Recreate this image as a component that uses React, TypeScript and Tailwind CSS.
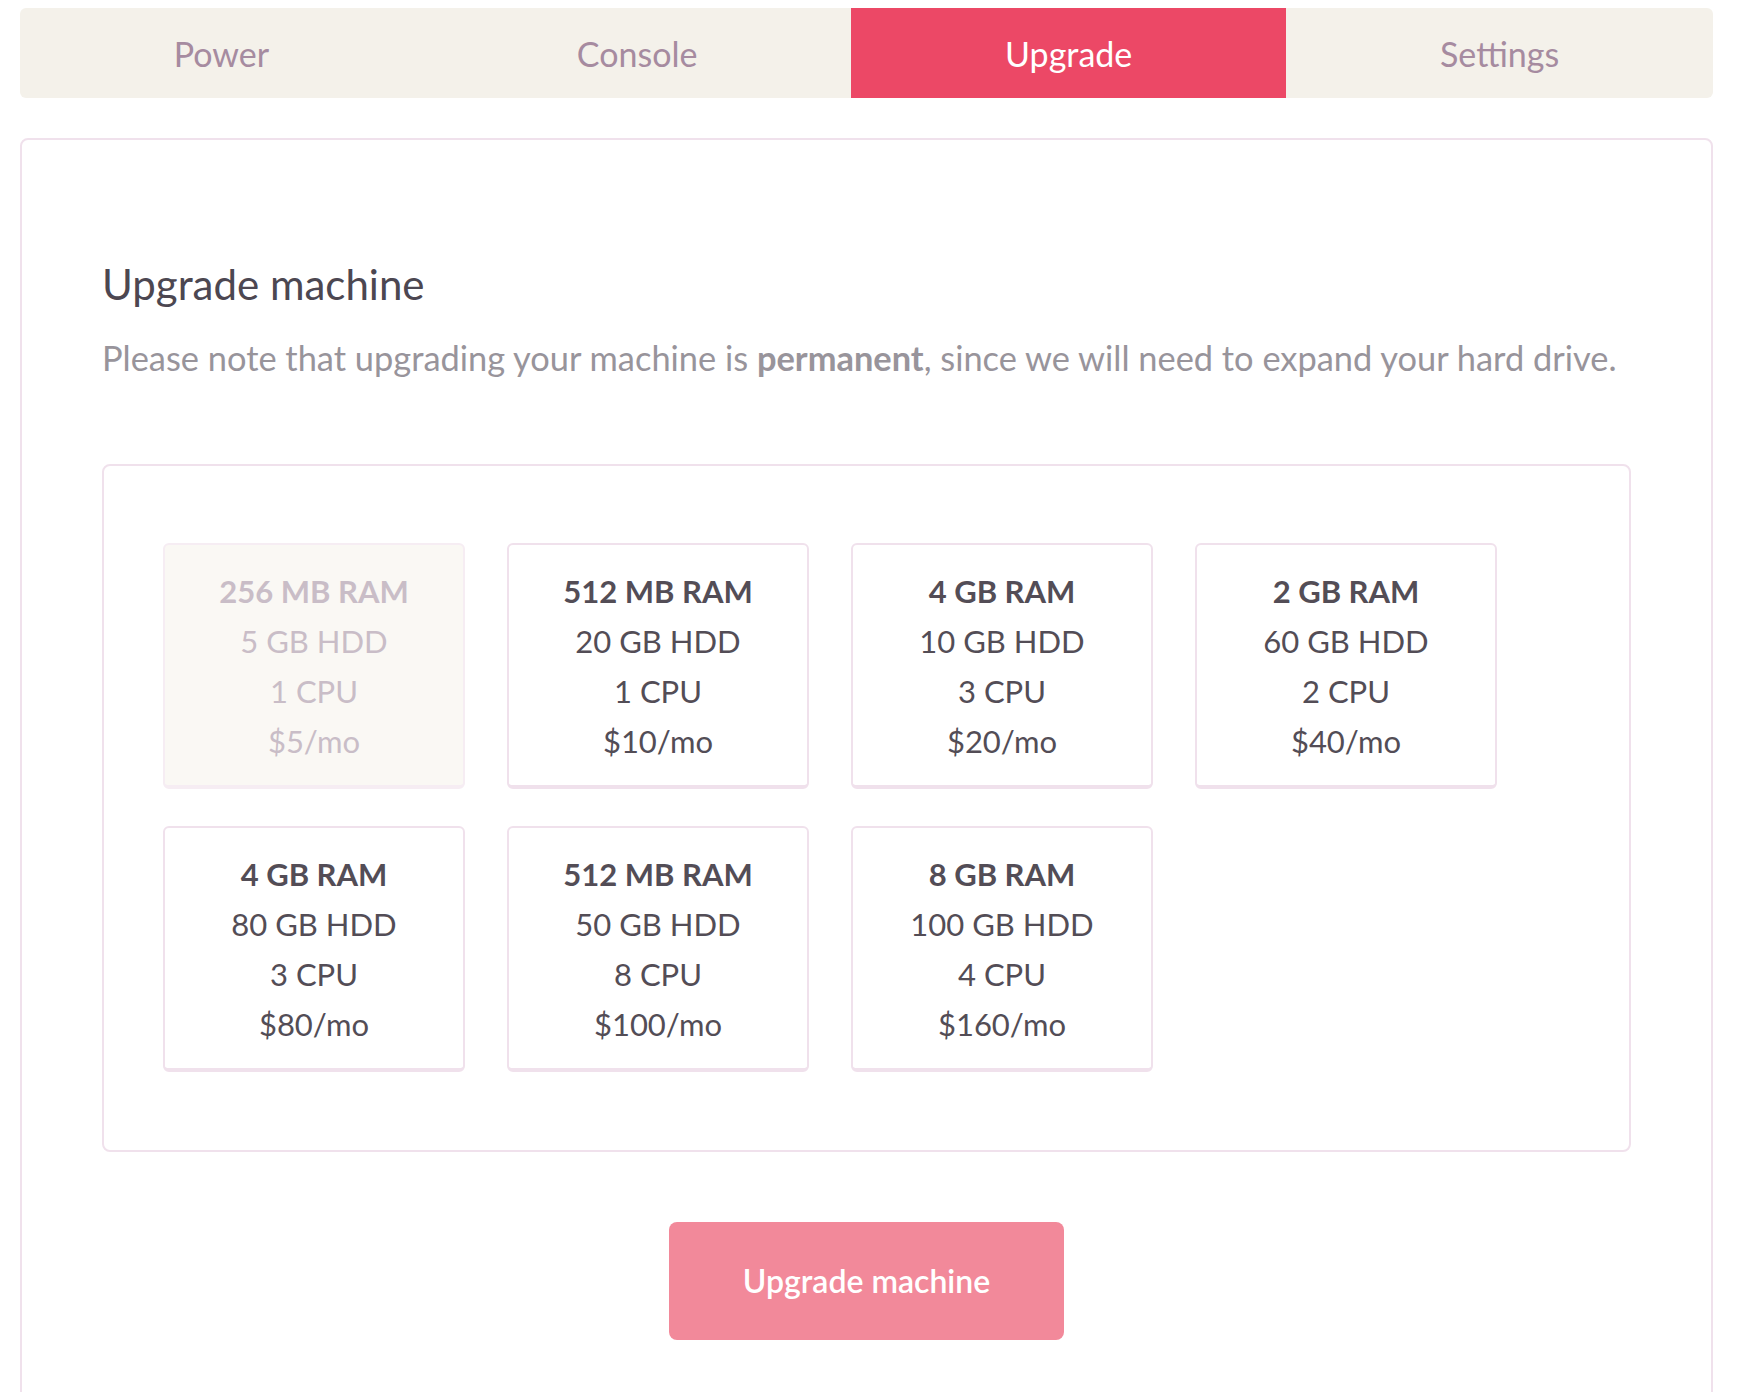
import React from "react";

type Plan = { ram: string; hdd: string; cpu: string; price: string; disabled?: boolean };

const plans: Plan[] = [
  { ram: "256 MB RAM", hdd: "5 GB HDD", cpu: "1 CPU", price: "$5/mo", disabled: true },
  { ram: "512 MB RAM", hdd: "20 GB HDD", cpu: "1 CPU", price: "$10/mo" },
  { ram: "4 GB RAM", hdd: "10 GB HDD", cpu: "3 CPU", price: "$20/mo" },
  { ram: "2 GB RAM", hdd: "60 GB HDD", cpu: "2 CPU", price: "$40/mo" },
  { ram: "4 GB RAM", hdd: "80 GB HDD", cpu: "3 CPU", price: "$80/mo" },
  { ram: "512 MB RAM", hdd: "50 GB HDD", cpu: "8 CPU", price: "$100/mo" },
  { ram: "8 GB RAM", hdd: "100 GB HDD", cpu: "4 CPU", price: "$160/mo" },
];

const tabs = ["Power", "Console", "Upgrade", "Settings"];

function PlanCard({ plan }: { plan: Plan }) {
  if (plan.disabled) {
    return (
      <div className="w-[302px] rounded-[6px] border-2 border-b-4 border-[#f6edf3] bg-[#faf8f4] pt-[21px] pb-[19px] text-center text-[31px] leading-[50px] text-[#c9bdc7]">
        <div className="font-bold">{plan.ram}</div>
        <div>{plan.hdd}</div>
        <div>{plan.cpu}</div>
        <div>{plan.price}</div>
      </div>
    );
  }
  return (
    <div className="w-[302px] rounded-[6px] border-2 border-b-4 border-[#f0e1ec] bg-white pt-[21px] pb-[19px] text-center text-[31px] leading-[50px] text-[#534d56]">
      <div className="font-bold">{plan.ram}</div>
      <div>{plan.hdd}</div>
      <div>{plan.cpu}</div>
      <div>{plan.price}</div>
    </div>
  );
}

export default function App() {
  return (
    <div className="min-h-screen bg-white pl-[20px] pt-[8px] font-['Lato','Open_Sans',sans-serif]">
      <div className="w-[1693px]">
        <nav className="flex h-[90px] overflow-hidden rounded-[6px] bg-[#f4f1ea]">
          {tabs.map((t) =>
            t === "Upgrade" ? (
              <div
                key={t}
                className="flex flex-auto items-center justify-center bg-[#ec4866] text-[34px] text-white"
              >
                {t}
              </div>
            ) : (
              <div
                key={t}
                className="flex flex-auto items-center justify-center text-[34px] text-[#a68ba0]"
              >
                {t}
              </div>
            )
          )}
        </nav>

        <div className="mt-[40px] rounded-[8px] border-2 border-[#f0e1ec] px-[80px] pt-[119px] pb-[80px]">
          <h2 className="text-[42px] leading-[50px] text-[#4c4751]">Upgrade machine</h2>
          <p className="mt-[27px] text-[34.4px] leading-[44px] text-[#98949b]">
            Please note that upgrading your machine is{" "}
            <span className="font-bold">permanent</span>, since we will need to expand your hard
            drive.
          </p>

          <div className="mt-[84px] rounded-[8px] border-2 border-[#f0e1ec] pl-[59px] pr-[40px] pt-[77px] pb-[78px]">
            <div className="flex flex-wrap gap-x-[42px] gap-y-[37px]">
              {plans.map((p, i) => (
                <PlanCard key={i} plan={p} />
              ))}
            </div>
          </div>

          <div className="mt-[70px] flex justify-center">
            <button className="h-[118px] w-[395px] rounded-[8px] bg-[#f2899a] text-[32px] font-semibold text-white">
              Upgrade machine
            </button>
          </div>
        </div>
      </div>
    </div>
  );
}
